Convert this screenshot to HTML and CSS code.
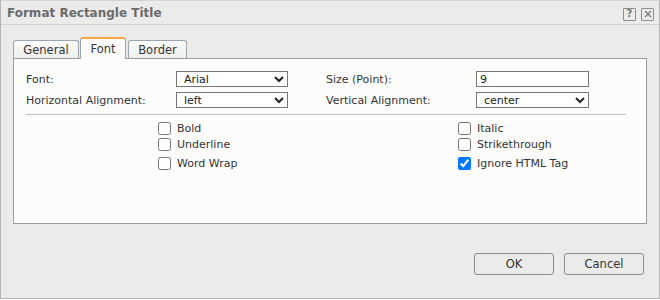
FILE: index.html
```html
<!DOCTYPE html>
<html lang="en">
<head>
  <meta charset="UTF-8">
  <title>Format Rectangle Title</title>
  <link rel="stylesheet" href="styles.css">
</head>
<body>
  <div class="dialog">
    <div class="titlebar">
      <span class="title">Format Rectangle Title</span>
      <div class="title-icons">
        <span class="ticon">?</span>
        <span class="ticon">
          <svg width="8" height="8" viewBox="0 0 8 8"><path d="M1 1L7 7M7 1L1 7" stroke="#777" stroke-width="1.3" fill="none"/></svg>
        </span>
      </div>
    </div>

    <div class="tabs">
      <div class="tab">General</div>
      <div class="tab active">Font</div>
      <div class="tab">Border</div>
    </div>

    <div class="panel">
      <div class="fields">
        <label>Font:</label>
        <select><option>Arial</option></select>
        <label>Size (Point):</label>
        <input type="text" value="9">
        <label>Horizontal Alignment:</label>
        <select><option>left</option></select>
        <label>Vertical Alignment:</label>
        <select><option>center</option></select>
      </div>

      <div class="divider"></div>

      <div class="checks">
        <label class="check"><input type="checkbox"> Bold</label>
        <label class="check"><input type="checkbox"> Italic</label>
        <label class="check"><input type="checkbox"> Underline</label>
        <label class="check"><input type="checkbox"> Strikethrough</label>
        <label class="check tall"><input type="checkbox"> Word Wrap</label>
        <label class="check tall"><input type="checkbox" checked> Ignore HTML Tag</label>
      </div>
    </div>

    <div class="buttons">
      <button>OK</button>
      <button>Cancel</button>
    </div>
  </div>
</body>
</html>
```

FILE: styles.css
```css
body {
  margin: 0;
  font-family: 'DejaVu Sans', Verdana, sans-serif;
  font-size: 11px;
  color: #333;
  background-color: #ffffff;
}
.dialog {
  width: 658px;
  height: 297px;
  background-color: #ebecea;
  border: 1px solid #b4b4b4;
  border-top-color: #d6d6d6;
}
.titlebar {
  height: 23px;
  border-bottom: 1px solid #d2d3d1;
  display: flex;
  align-items: center;
  justify-content: space-between;
  padding: 0 5px 0 6px;
}
.title {
  font-weight: bold;
  font-size: 12px;
  color: #6b6b6b;
}
.title-icons {
  display: flex;
  gap: 5px;
  margin-top: 3px;
}
.ticon {
  width: 11px;
  height: 11px;
  border: 1px solid #8c8c8c;
  border-radius: 1px;
  display: flex;
  align-items: center;
  justify-content: center;
  font-size: 10px;
  font-weight: bold;
  color: #777;
  line-height: 1;
}
.tabs {
  display: flex;
  align-items: flex-end;
  gap: 1px;
  margin: 12px 0 0 12px;
  height: 21px;
  position: relative;
  z-index: 1;
}
.tab {
  height: 17px;
  border: 1px solid #9aa5ad;
  border-bottom: none;
  border-radius: 3px 3px 0 0;
  background: linear-gradient(#fbfbfa, #eeeeec);
  display: flex;
  align-items: center;
  justify-content: center;
  font-size: 11.5px;
  color: #333;
}
.tab:nth-child(1) {
  width: 64px;
}
.tab:nth-child(3) {
  width: 57px;
  margin-left: 1px;
}
.tab.active {
  width: 44px;
  border-top: 2px solid #f2a93b;
  background: #fcfdfb;
  margin-bottom: -1px;
  height: 20px;
}
.panel {
  margin: 0 12px;
  height: 152px;
  border: 1px solid #9a9c9c;
  background-color: #fcfdfb;
  padding: 12px 20px 0 12px;
}
.fields {
  display: grid;
  grid-template-columns: 150px 112px 38px 150px 113px;
  row-gap: 5px;
  align-items: center;
}
.fields label:nth-of-type(2n) {
  grid-column: 4;
}
.fields select, .fields input {
  height: 16px;
  box-sizing: border-box;
  border: 1px solid #767676;
  border-radius: 0;
  font-family: 'DejaVu Sans', Verdana, sans-serif;
  font-size: 11px;
  color: #222;
  background-color: #fff;
  padding: 0 0 0 3px;
  margin: 0;
}
.fields select:first-of-type, .fields select:nth-of-type(2) {
  grid-column: 2;
}
.fields input {
  grid-column: 5;
  outline: none;
}
.fields select:nth-of-type(3) {
  grid-column: 5;
}
.divider {
  height: 1px;
  background-color: #b9c4cb;
  margin-top: 6px;
}
.checks {
  display: grid;
  grid-template-columns: 300px 200px;
  padding-left: 132px;
  margin-top: 5px;
}
.check {
  display: flex;
  align-items: center;
  gap: 6px;
  height: 16px;
  color: #333;
}
.check.tall {
  margin-top: 3px;
}
.check input {
  margin: 0;
  width: 13px;
  height: 13px;
}
.buttons {
  display: flex;
  justify-content: flex-end;
  gap: 10px;
  padding: 29px 15px 0 0;
}
.buttons button {
  width: 80px;
  height: 22px;
  border: 1px solid #8b8b8b;
  border-radius: 3px;
  background-color: #ebecea;
  font-family: 'DejaVu Sans', Verdana, sans-serif;
  font-size: 11.5px;
  color: #333;
}
```
